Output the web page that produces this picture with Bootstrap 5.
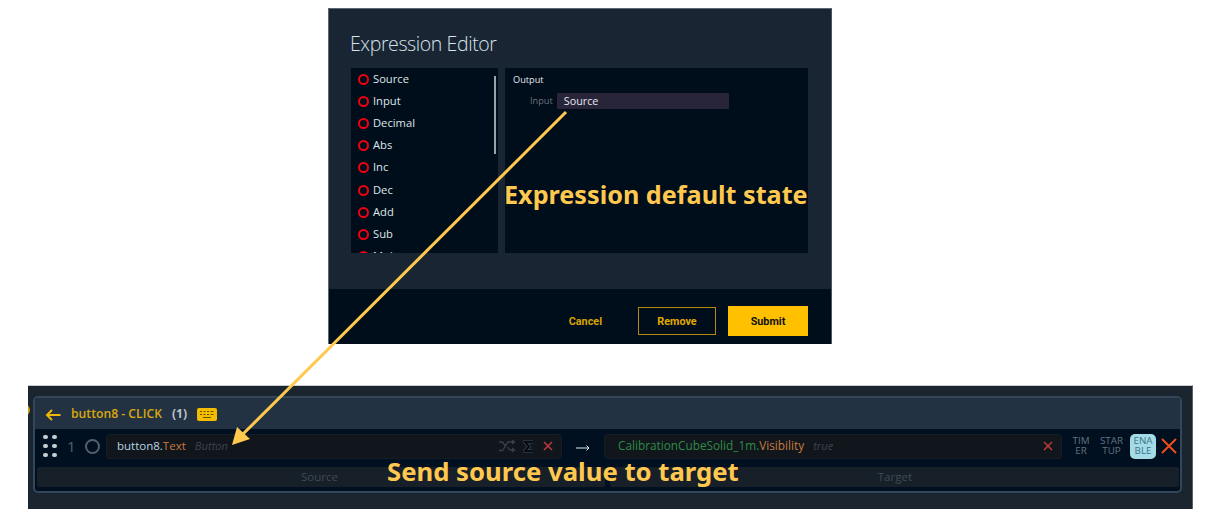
<!DOCTYPE html>
<html lang="en">
<head>
  <meta charset="UTF-8" />
  <meta name="viewport" content="width=device-width, initial-scale=1.0"/>
  <title>Expression Editor</title>
  <link href="https://cdn.jsdelivr.net/npm/bootstrap@5.3.0/dist/css/bootstrap.min.css" rel="stylesheet"/>
  <style>
    body { background: #fff; font-family: "Open Sans", "Noto Sans", sans-serif; width: 1212px; height: 519px; overflow: hidden; position: relative; }
    .editor-win { margin: 8px 0 0 328px; width: 504px; height: 336px; background: #1a2533; border: 1px solid #5b6772; border-bottom: 0; border-right-color: #4a5661; }
    .editor-title { color: #d5e2ea; font-size: 19.5px; font-weight: 300; letter-spacing: -.4px; padding: 22px 0 0 21px; height: 59px; line-height: 26px; margin: 0; }
    .editor-panels { padding: 0 23px 0 22px; height: 185px; gap: 7px; }
    .fn-list { width: 147px; background: #000d1a; overflow: hidden; position: relative; padding: 0 0 0 7px; }
    .fn-item { height: 22.2px; color: #dfe6ea; font-size: 11.2px; gap: 4px; }
    .fn-dot { width: 11px; height: 11px; border: 2px solid #f00010; border-radius: 50%; flex: none; }
    .fn-scroll { position: absolute; right: 2px; top: 8px; width: 2px; height: 78px; background: #9aa3aa; }
    .out-panel { flex: 1; background: #000d1a; padding: 5px 7px 5px 8px; }
    .out-head { color: #e3e9ee; font-size: 9.2px; font-weight: 500; line-height: 13px; }
    .out-row { margin: 7px 0 0 17px; gap: 4px; }
    .out-label { color: #6b747c; font-size: 9.2px; }
    .out-value { width: 172px; height: 16px; background: #28243a; color: #e4e7ec; font-size: 10.8px; line-height: 16px; padding-left: 7px; border-radius: 1px; }
    .editor-foot { margin-top: 36px; height: 55px; background: #000d1a; padding: 17px 23px 0 0; gap: 12px; font-family: Roboto, sans-serif; font-size: 10.8px; font-weight: 700; }
    .editor-foot span { padding-top: 2px; }
    .foot-cancel { color: #d9a400; margin-right: 24px; height: 30px; }
    .foot-remove { width: 78px; height: 28px; margin-top: 1px; color: #e0aa00; border: 1px solid #b18a10; }
    .foot-submit { width: 80px; height: 30px; background: #ffc000; color: #111; }

    .flow-strip { margin: 41px 0 0 28px; width: 1165px; height: 124px; position: relative; overflow: hidden; background: #1a2530; border-top: 1px solid #c9cdd1; border-right: 1px solid #59636d; padding: 10px 10px 15px 5px; }
    .edge-pin { position: absolute; left: -6px; top: 19px; width: 8px; height: 10px; border-radius: 50%; background: #c89a10; }
    .flow-box { height: 97px; border: 2px solid #33475a; border-radius: 5px; background: #001020; overflow: hidden; }
    .flow-head { height: 31px; background: #233242; padding: 2px 0 0 10px; font-size: 12.2px; font-weight: 600; color: #d9a80c; }
    .flow-count { color: #b9c1c8; font-weight: 700; margin-left: 10px; margin-right: 10px; }
    .flow-row { height: 34px; background: #001020; padding: 3px 3px 3px 8px; }
    .grip { width: 14px; display: grid; grid-template-columns: 4px 4px; gap: 4.500px 5px; flex: none; }
    .grip i { width: 4.500px; height: 4.500px; border-radius: 50%; background: #c6ced4; }
    .row-num { color: #56626e; font-size: 15px; margin-left: 10px; width: 15px; }
    .row-ring { width: 15px; height: 15px; border: 2px solid #56606b; border-radius: 50%; margin-left: 3px; flex: none; }
    .slot { height: 25px; background: #11161d; border: 1px solid #141c26; border-radius: 3px; font-size: 11.5px; padding: 0 8px 0 10px; gap: 9px; }
    .slot-src { width: 456px; margin-left: 6px; }
    .slot-tgt { width: 458px; padding-left: 13px; font-size: 11.8px; }
    .flow-arrow { width: 42px; flex: none; text-align: center; line-height: 1; }
    .sigma-ico { margin-left: -2px; }
    .tx-blue { color: #b8d4e3; }
    .tx-orange { color: #c67c3f; }
    .tx-green { color: #2e8b45; }
    .tx-hint { color: #3d444c; font-style: italic; font-size: 11.2px; }
    .mini-tag { font-size: 9.800px; line-height: 10px; text-align: center; color: #66727d; flex: none; }
    .tag-a { width: 24px; margin-left: 7px; }
    .tag-b { width: 25px; margin-left: 6px; }
    .mini-on { width: 26px; height: 25px; background: #a5dbe6; color: #3a7689; border-radius: 5px; margin-left: 6px; padding-top: 2px; }
    .row-del { margin-left: 5px; flex: none; }
    .flow-foot { height: 20px; margin: 4px 1px 0 2px; gap: 5px; font-size: 11.6px; color: #3f4a54; }
    .foot-cell { background: #171f28; border-radius: 2px; text-align: center; height: 20px; line-height: 20px; }
    .cell-src { width: 568px; padding-right: 3px; }
    .cell-tgt { flex: 1; padding-left: 1px; }
    .note-lay { position: absolute; left: 0; top: 0; pointer-events: none; }
    .note-text { position: absolute; color: #ffc84f; font-family: "Noto Sans", sans-serif; font-weight: 700; line-height: 30px; white-space: nowrap; }
    .note-a { left: 504px; top: 179px; font-size: 25.2px; }
    .note-b { left: 387px; top: 457px; font-size: 25.7px; }
  </style>
</head>
<body>
  <section class="editor-win d-flex flex-column">
    <h5 class="editor-title">Expression Editor</h5>
    <div class="editor-panels d-flex">
      <div class="fn-list" id="fnList"><div class="fn-scroll"></div></div>
      <div class="out-panel">
        <div class="out-head">Output</div>
        <div class="out-row d-flex align-items-center">
          <span class="out-label">Input</span>
          <div class="out-value">Source</div>
        </div>
      </div>
    </div>
    <div class="editor-foot d-flex justify-content-end align-items-start">
      <span class="foot-cancel d-flex align-items-center">Cancel</span>
      <span class="foot-remove d-flex align-items-center justify-content-center">Remove</span>
      <span class="foot-submit d-flex align-items-center justify-content-center">Submit</span>
    </div>
  </section>

  <section class="flow-strip">
    <span class="edge-pin"></span>
    <div class="flow-box">
      <div class="flow-head d-flex align-items-center">
        <svg width="16" height="14" viewBox="0 0 16 14" style="margin-right:10px"><path d="M15.500 7H2M7 2 2 7l5 5" fill="none" stroke="#f2b705" stroke-width="2"/></svg>
        <span>button8 - CLICK</span>
        <span class="flow-count">(1)</span>
        <svg width="20" height="13" viewBox="0 0 20 13"><rect width="20" height="13" rx="2" fill="#f5bd00"/><path d="M3 3.500h2M6.500 3.500h2M10 3.500h2M13.500 3.500h3M3 6.500h2M6.500 6.500h2M10 6.500h2M13.500 6.500h3M6 9.500h8" stroke="#6a5200" stroke-width="1"/></svg>
      </div>
      <div class="flow-row d-flex align-items-center">
        <div class="grip"><i></i><i></i><i></i><i></i><i></i><i></i></div>
        <span class="row-num">1</span>
        <span class="row-ring"></span>
        <div class="slot slot-src d-flex align-items-center">
          <span class="tx-blue">button8.<span class="tx-orange">Text</span></span>
          <span class="tx-hint flex-grow-1">Button</span>
          <svg width="18" height="14" viewBox="0 0 18 14"><path d="M1 11.500h3.500L10 3h6M1 3h3.500L7 6.500M9.500 8l1 1.500c.5.800 1 1.500 2 1.500H16M14 1l2.500 2L14 5M14 9l2.500 2-2.500 2" fill="none" stroke="#3a4048" stroke-width="1.300"/></svg>
          <svg class="sigma-ico" width="11" height="13" viewBox="0 0 11 13"><path d="M10 2H2L6 6.500 2 11h8" fill="none" stroke="#2a3b4c" stroke-width="3.500"/><path d="M10 2H2L6 6.500 2 11h8" fill="none" stroke="#000" stroke-width="1.500"/></svg>
          <svg width="10" height="10" viewBox="0 0 10 10"><path d="M1 1l8 8M9 1 1 9" stroke="#c0393b" stroke-width="1.500"/></svg>
        </div>
        <span class="flow-arrow"><svg width="14" height="8" viewBox="0 0 14 8"><path d="M0 4h13M10.500 1.500 13 4l-2.500 2.500" fill="none" stroke="#dfe6ec" stroke-width="1"/></svg></span>
        <div class="slot slot-tgt d-flex align-items-center">
          <span class="tx-green">CalibrationCubeSolid_1m.<span class="tx-orange">Visibility</span></span>
          <span class="tx-hint flex-grow-1">true</span>
          <svg width="10" height="10" viewBox="0 0 10 10"><path d="M1 1l8 8M9 1 1 9" stroke="#c0393b" stroke-width="1.500"/></svg>
        </div>
        <span class="mini-tag tag-a">TIM<br>ER</span>
        <span class="mini-tag tag-b">STAR<br>TUP</span>
        <span class="mini-tag mini-on">ENA<br>BLE</span>
        <svg class="row-del" width="16" height="16" viewBox="0 0 16 16"><path d="M1 1l14 14M15 1 1 15" stroke="#f04e16" stroke-width="2"/></svg>
      </div>
      <div class="flow-foot d-flex">
        <span class="foot-cell cell-src">Source</span>
        <span class="foot-cell cell-tgt">Target</span>
      </div>
    </div>
  </section>

  <svg class="note-lay" width="1212" height="519" viewBox="0 0 1212 519">
    <path d="M566 112 243 434" stroke="#ffc84f" stroke-width="3" fill="none"/>
    <polygon points="232,445 250,439 237,427" fill="#ffc84f"/>
  </svg>
  <div class="note-text note-a">Expression default state</div>
  <div class="note-text note-b">Send source value to target</div>

  <script>
    const names = ['Source', 'Input', 'Decimal', 'Abs', 'Inc', 'Dec', 'Add', 'Sub', 'Mul'];
    const list = document.getElementById('fnList');
    names.forEach((n) => {
      list.insertAdjacentHTML('beforeend', `<div class="fn-item d-flex align-items-center"><span class="fn-dot"></span><span>${n}</span></div>`);
    });
  </script>
  <script src="https://cdn.jsdelivr.net/npm/bootstrap@5.3.0/dist/js/bootstrap.bundle.min.js"></script>
</body>
</html>
